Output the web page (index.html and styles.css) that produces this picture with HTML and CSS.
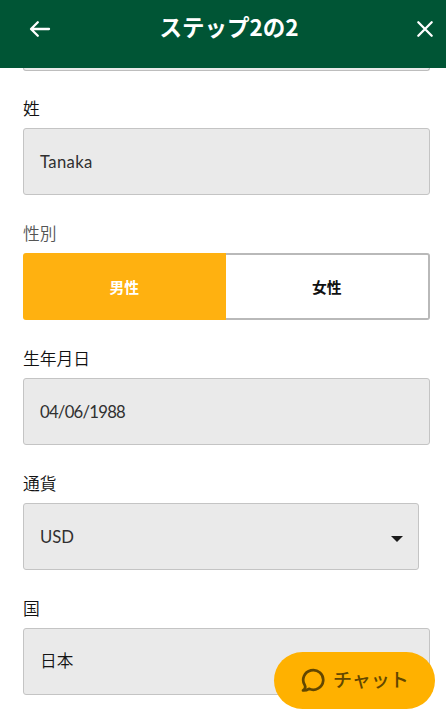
FILE: index.html
```html
<!DOCTYPE html>
<html lang="ja">
<head>
<meta charset="utf-8">
<title>ステップ2の2</title>
<link rel="stylesheet" href="styles.css">
</head>
<body>
<div class="screen">
  <header class="header">
    <svg class="back" width="22" height="18" viewBox="0 0 22 18"><path d="M8.8 2.2 2 9l6.8 6.8M2.4 9H20" fill="none" stroke="#fff" stroke-width="2.3" stroke-linecap="round" stroke-linejoin="round"/></svg>
    <h1 class="title">ステップ2の2</h1>
    <svg class="close" width="18" height="18" viewBox="0 0 18 18"><path d="M2.3 2.3 15.7 15.7M15.7 2.3 2.3 15.7" fill="none" stroke="#fff" stroke-width="2.3" stroke-linecap="round"/></svg>
  </header>
  <main class="form">
    <div class="cut-field"></div>
    <section class="group">
      <div class="label">姓</div>
      <div class="field"><span class="name">Tanaka</span></div>
    </section>
    <section class="group">
      <div class="label muted">性別</div>
      <div class="toggle">
        <div class="option selected">男性</div>
        <div class="option">女性</div>
      </div>
    </section>
    <section class="group">
      <div class="label">生年月日</div>
      <div class="field"><span class="date">04/06/1988</span></div>
    </section>
    <section class="group">
      <div class="label">通貨</div>
      <div class="field select"><span>USD</span>
        <svg width="12" height="6" viewBox="0 0 12 6"><path d="M0 0H12L6 6Z" fill="#1b1b1b"/></svg>
      </div>
    </section>
    <section class="group">
      <div class="label">国</div>
      <div class="field country"><span>日本</span></div>
    </section>
  </main>
  <div class="chat">
    <svg width="24" height="25" viewBox="0 0 24 25"><path d="M2 22.5C4 21.3 4.7 19.2 3.8 17.2A10 9.8 0 1 1 8 20.8C6.2 22.1 4.2 22.6 2 22.5Z" fill="none" stroke="#624700" stroke-width="2.7" stroke-linejoin="round"/></svg>
    <span>チャット</span>
  </div>
</div>
</body>
</html>
```
FILE: styles.css
```css
* { box-sizing: border-box; }
body {
  margin: 0;
  background: #fff;
  font-family: Lato, "Noto Sans CJK JP", sans-serif;
  color: #1c1c1c;
}
.screen { position: relative; width: 446px; height: 714px; overflow: hidden; }
.header {
  display: flex;
  align-items: flex-start;
  justify-content: space-between;
  height: 68px;
  padding: 20px 12px 0 29px;
  background: #005535;
}
.title {
  margin: -10px 0 0 -9px;
  font: 700 22.5px/32px "Noto Sans CJK JP", sans-serif;
  color: #fff;
  white-space: nowrap;
}
.form { padding: 0 16px 0 23px; }
.cut-field {
  height: 3px;
  border: 1px solid #bdbdbd;
  border-top: 0;
  border-radius: 0 0 3px 3px;
  background: #eaeaea;
}
.group { height: 125px; }
.label {
  height: 57px;
  padding-top: 24px;
  font: 350 16.8px/26px "Noto Sans CJK JP", sans-serif;
  color: #111;
}
.muted { color: #555; }
.field {
  display: flex;
  align-items: center;
  height: 67px;
  padding: 0 16px;
  border: 1px solid #c4c4c4;
  border-radius: 3px;
  background: #eaeaea;
  font-size: 16.7px;
  line-height: 24px;
  color: #303030;
}
.name { letter-spacing: 0.35px; }
.date { letter-spacing: -0.75px; }
.select { width: 396px; justify-content: space-between; padding-right: 15px; }
.select svg { margin-top: 5px; }
.country { padding-bottom: 3px; font-family: "Noto Sans CJK JP", sans-serif; font-weight: 350; color: #151515; }
.toggle { display: flex; height: 67px; }
.option {
  flex: 1;
  display: flex;
  align-items: center;
  justify-content: center;
  border: 2px solid #b9b9b9;
  border-left: 0;
  border-radius: 0 3px 3px 0;
  font: 700 14.8px/22px "Noto Sans CJK JP", sans-serif;
  color: #111;
}
.selected {
  border: 0;
  border-radius: 3px 0 0 3px;
  background: #ffb110;
  color: #fff;
}
.chat {
  position: absolute;
  left: 274px;
  top: 652px;
  width: 161px;
  height: 57px;
  display: flex;
  align-items: center;
  gap: 8px;
  padding-left: 27px;
  border-radius: 29px;
  background: #ffb100;
  color: #624700;
  font: 500 19px/28px "Noto Sans CJK JP", sans-serif;
}
.chat span { margin-top: -4px; }
```
